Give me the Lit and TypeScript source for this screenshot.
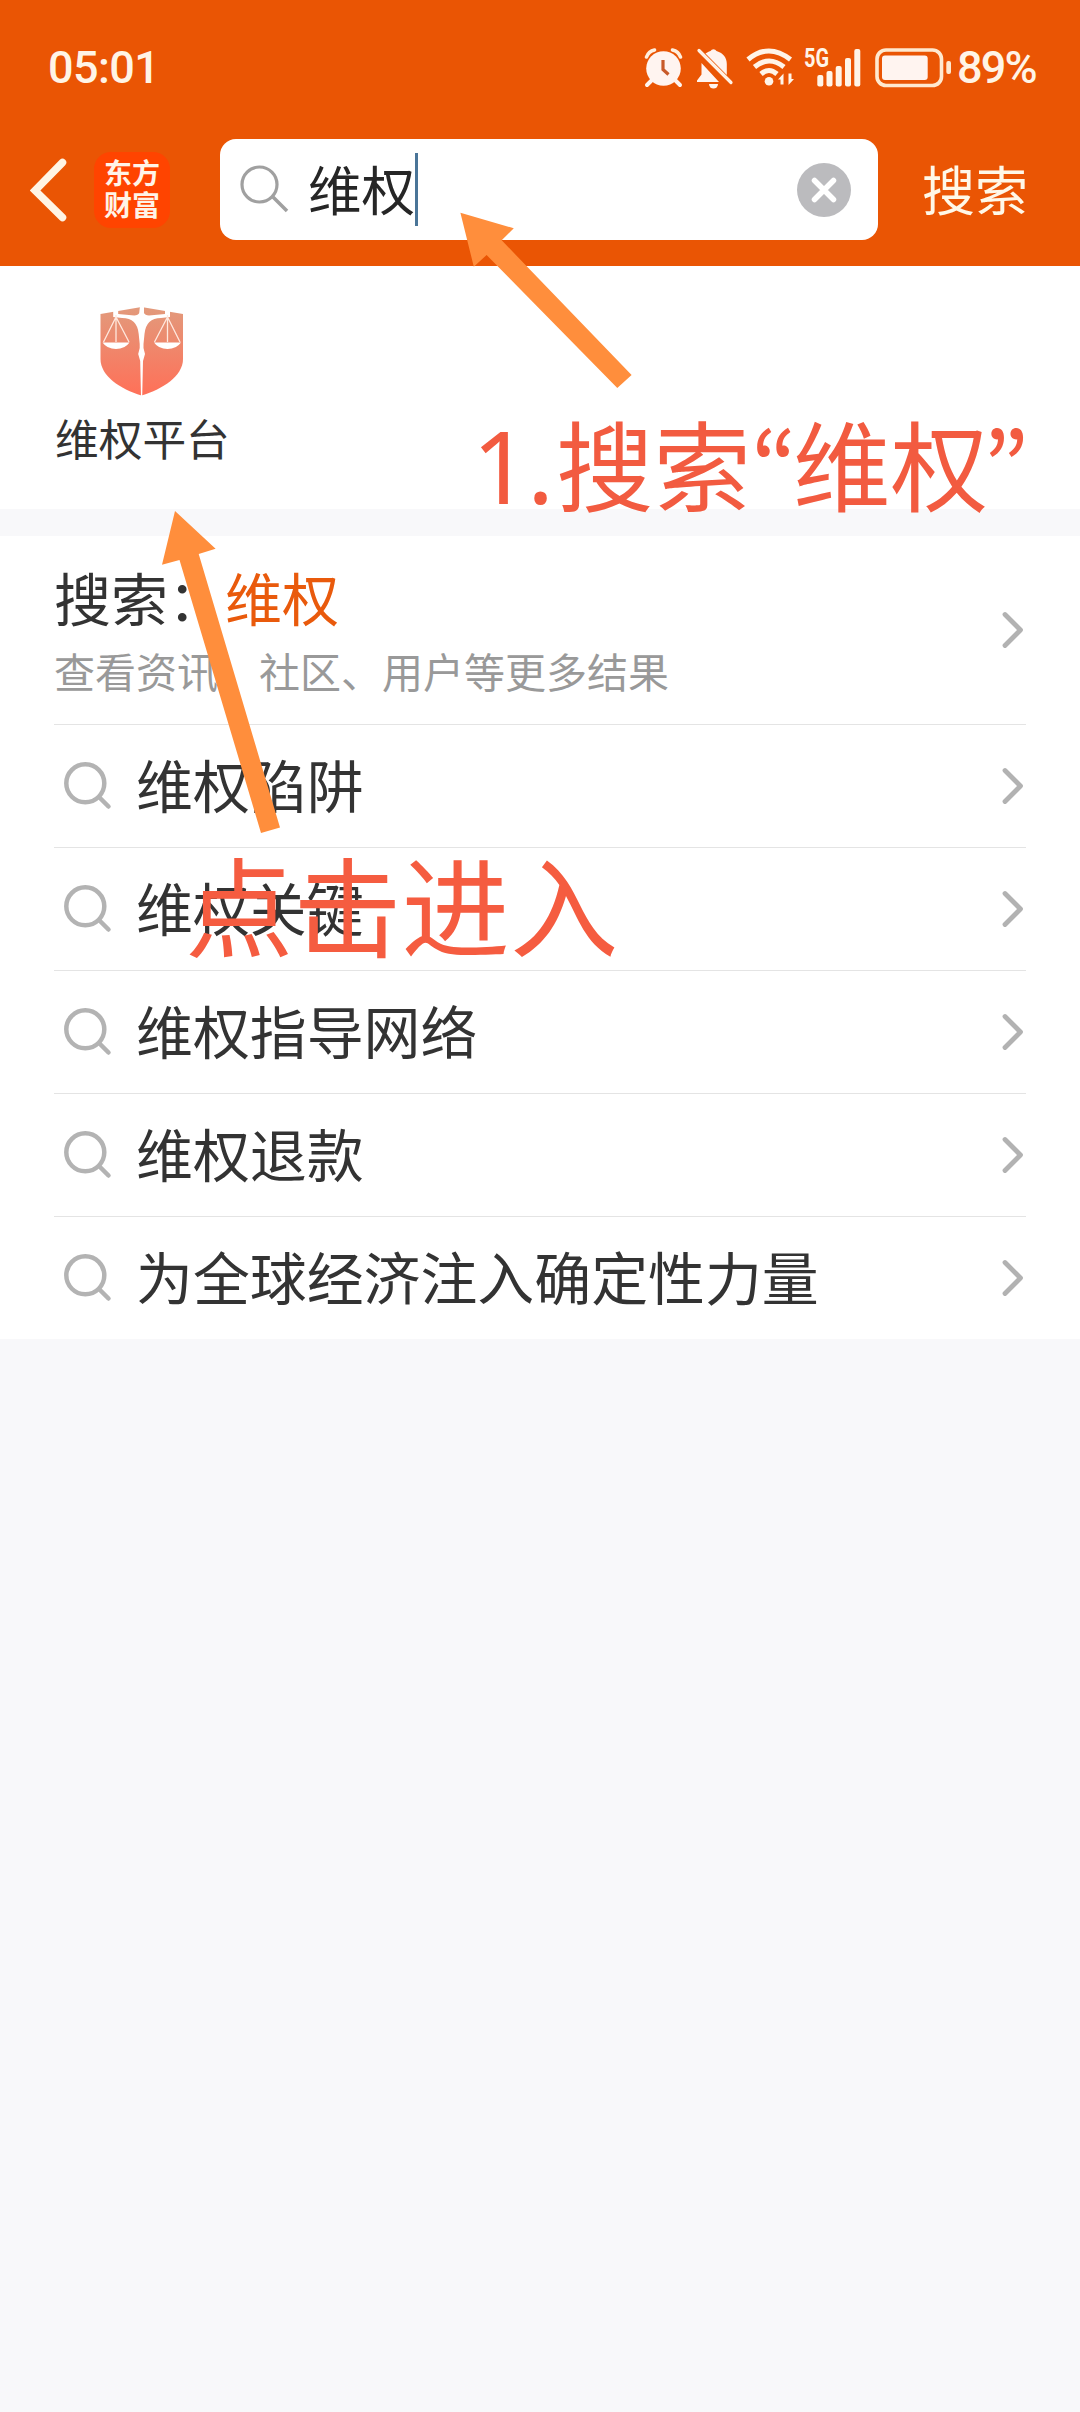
import { LitElement, html, css, svg } from "lit";
import { customElement, property } from "lit/decorators.js";

const FONT = css`"Noto Sans CJK SC", sans-serif`;

@customElement("status-bar")
class StatusBar extends LitElement {
  static styles = css`
    :host {
      display: flex;
      align-items: center;
      height: 40px;
      padding: 48px 44px 0 48px;
      color: #fff4e6;
      font-family: Roboto, ${FONT};
      font-weight: 500;
      font-size: 45px;
      line-height: 40px;
    }
    .time { flex: 1; letter-spacing: -0.6px; }
    .icons { display: flex; height: 40px; }
    .icons svg { display: block; overflow: visible; }
    .gap-a { margin-right: 14px; }
    .gap-b { margin-right: 13px; }
    .gap-c { margin-right: 9px; }
    .gap-d { margin-right: 14px; }
    .gap-e { margin-right: 5px; }
    .pct { width: 79px; letter-spacing: -1.8px; white-space: nowrap; }
    .net { font: 700 25px/25px Roboto, sans-serif; }
  `;
  render() {
    return html`
      <div class="time">05:01</div>
      <div class="icons">
        <svg class="gap-a" width="38" height="40" viewBox="645 48 38 40" fill="#fff4f0">
          <circle cx="663.5" cy="68.5" r="17.3" />
          <path d="M652 80l-5 5M675 80l5 5" stroke="#fff4f0" stroke-width="4" stroke-linecap="round" />
          <path d="M646.5 57a11 11 0 0 1 8-7M680.500 57a11 11 0 0 0-8-7" stroke="#ffeedd" stroke-width="3.600" fill="none" stroke-linecap="round" />
          <path d="M663 60v9.500l5.500 5" stroke="#c85a2a" stroke-width="3.200" fill="none" />
        </svg>
        <svg class="gap-b" width="36" height="40" viewBox="697 48 36 40" fill="#fff4f0">
          <path d="M697 82v-1.500l4.500-6V63l17.500 19z" />
          <path d="M705.500 53.500q3.500-2.200 5-2.500a3.500 3.500 0 0 1 6 0c7 2 10.300 7 10.300 13v11z" />
          <path d="M709 84h9a4.500 4.500 0 0 1-9 0z" />
          <path d="M699 50.500l32 32" stroke="#fff0e4" stroke-width="3.200" stroke-linecap="round" />
        </svg>
        <svg class="gap-c" width="48" height="40" viewBox="746 48 48 40" fill="none" stroke="#fff4e8" stroke-width="5">
          <path d="M748 59.500q20.500-17 42.500 0" />
          <path d="M754.500 67q14.500-12 29.500 0" />
          <path d="M761 74q8-7 16 0" />
          <circle cx="769" cy="81.300" r="4.300" fill="#fff4e8" stroke="none" />
          <path d="M778 79.500l5.500-6v11h-3v-5zM794 79l-5.500 6V73.500h3v5.500z" fill="#fff4e8" stroke="none" />
        </svg>
        <svg class="gap-d" width="58" height="40" viewBox="803 48 58 40" fill="#fff4e8">
          <text class="net" x="804" y="67" textLength="25" lengthAdjust="spacingAndGlyphs">5G</text>
          ${[[817.3, 75], [826.5, 71], [835.7, 66], [845, 58], [854.3, 49]].map(
            ([x, y]) => svg`<rect x=${x} y=${y} width="6" height=${86.5 - y} rx="2" />`
          )}
        </svg>
        <svg class="gap-e" width="77" height="40" viewBox="875 48 77 40">
          <rect x="877" y="50" width="64.500" height="35.500" rx="9" fill="none" stroke="#ffe9cf" stroke-width="3.600" />
          <rect x="882" y="55.500" width="45.700" height="24.500" rx="3" fill="#fff4f0" />
          <rect x="946.300" y="61" width="4.700" height="13" rx="2" fill="#ffe9cf" />
        </svg>
      </div>
      <div class="pct">89%</div>
    `;
  }
}

@customElement("search-bar")
class SearchBar extends LitElement {
  static styles = css`
    :host {
      display: flex;
      align-items: center;
      height: 101px;
      margin-top: 51px;
      padding: 0 0 26px 30px;
      font-family: ${FONT};
    }
    svg { display: block; flex: none; }
    .logo {
      flex: none;
      box-sizing: border-box;
      width: 76px;
      height: 76px;
      padding-bottom: 3px;
      margin: 0 50px 0 27px;
      border-radius: 17px;
      background: #ff4400;
      color: #fff4e8;
      display: flex;
      flex-direction: column;
      align-items: center;
      justify-content: center;
      font-size: 28px;
      line-height: 32px;
      font-weight: 700;
    }
    .box {
      display: flex;
      align-items: center;
      box-sizing: border-box;
      width: 657.500px;
      height: 101px;
      padding: 0 27px 0 20px;
      border-radius: 16px;
      background: #fff;
      margin-right: 44.500px;
      flex: none;
    }
    .query { margin: 0 0 4px 18px; font-size: 53.500px; line-height: 72px; color: #262626; }
    .caret { width: 3px; height: 73px; background: #4a7598; margin-right: auto; }
    .go { margin-bottom: 4px; font-size: 53px; line-height: 72px; color: #fff8e8; white-space: nowrap; }
  `;
  render() {
    return html`
      <svg width="37" height="64" viewBox="0 0 37 64" fill="none" stroke="#fff4e4" stroke-width="7.500">
        <path d="M32.500 4.500L5 32.500L32.500 59.500" stroke-linecap="round" />
      </svg>
      <div class="logo"><span>东方</span><span>财富</span></div>
      <div class="box">
        <svg width="50" height="50" viewBox="0 0 50 50" fill="none" stroke="#a0a0a0" stroke-width="3.200">
          <circle cx="19.500" cy="19.500" r="17.500" /><path d="M32 31L47 46" stroke-width="3.600" />
        </svg>
        <span class="query">维权</span><span class="caret"></span>
        <svg width="54" height="54" viewBox="0 0 54 54">
          <circle cx="27" cy="27" r="27" fill="#bbbbbe" />
          <path d="M17.500 17.500l19 19M36.500 17.500l-19 19" stroke="#fff" stroke-width="5.500" stroke-linecap="round" />
        </svg>
      </div>
      <span class="go">搜索</span>
    `;
  }
}

const chevron = svg`<svg class="chev" width="24" height="40" viewBox="0 0 24 40" fill="none"
  stroke="#b2b2b2" stroke-width="4.800" stroke-linecap="round" stroke-linejoin="round"><path d="M4 4.500L19.500 20L4 35.500" /></svg>`;

@customElement("suggest-row")
class SuggestRow extends LitElement {
  @property() text = "";
  static styles = css`
    :host {
      display: flex;
      align-items: center;
      box-sizing: border-box;
      height: 123px;
      margin: 0 54px;
      border-bottom: 1px solid #e4e4e4;
      font-family: ${FONT};
    }
    :host(:last-of-type) { border-bottom-color: transparent; }
    svg { display: block; flex: none; }
    .mag { margin-left: 9px; }
    .label { flex: 1; margin: 0 0 6px 23px; font-size: 56.900px; line-height: 84px; color: #333; white-space: nowrap; }
    .chev { margin-right: 1px; }
  `;
  render() {
    return html`
      <svg class="mag" width="50" height="50" viewBox="0 0 50 50" fill="none" stroke="#b3b3b3" stroke-width="4.500">
        <circle cx="22.300" cy="22.300" r="19" /><path d="M36.500 36.500L45.500 45.500" stroke-linecap="round" />
      </svg>
      <span class="label">${this.text}</span>
      ${chevron}
    `;
  }
}

@customElement("app-root")
class AppRoot extends LitElement {
  static styles = css`
    :host {
      display: block;
      position: relative;
      width: 1080px;
      height: 2412px;
      overflow: hidden;
      background: #f8f8fa;
      font-family: ${FONT};
      color: #333;
    }
    .header { height: 266px; background: #ea5504; }
    .entry { display: flex; height: 243px; background: #fff; padding-left: 55px; box-sizing: border-box; }
    .card { display: flex; flex-direction: column; align-items: center; padding-top: 40px; }
    .card svg { display: block; }
    .card span { margin-top: 9px; font-size: 43.700px; line-height: 64px; }
    .list { margin-top: 27px; background: #fff; height: 803px; }
    .top {
      display: flex;
      align-items: center;
      box-sizing: border-box;
      height: 189px;
      margin: 0 54px;
      border-bottom: 1px solid #e4e4e4;
    }
    .words { flex: 1; display: flex; flex-direction: column; padding-bottom: 2px; }
    .title { font-size: 57px; line-height: 80px; }
    .hot { color: #e95a0c; }
    .sub { margin-top: 2px; font-size: 41px; line-height: 64px; color: #999; }
    .chev { margin-right: 1px; }
    .arrows { position: absolute; left: 0; top: 0; }
    .note { position: absolute; color: #f25b40; white-space: nowrap; }
    .note-a { left: 472px; top: 390px; font-size: 97.500px; line-height: 144px; display: flex; align-items: baseline; }
    .lat { font-family: "Noto Sans", sans-serif; font-size: 101px; }
    .one { width: 55px; }
    .dot { width: 29px; }
    .quote { width: 42px; font-family: "Noto Sans CJK KR", sans-serif; }
    .close { margin-left: -5px; }
    .note-b { left: 185px; top: 822px; font-size: 108.300px; line-height: 160px; color: #f55c40; }
  `;
  render() {
    const words = ["维权陷阱", "维权关键", "维权指导网络", "维权退款", "为全球经济注入确定性力量"];
    return html`
      <div class="header"><status-bar></status-bar><search-bar></search-bar></div>
      <div class="entry">
        <div class="card">
          <svg width="84" height="90" viewBox="101 306 84 90">
            <defs>
              <linearGradient id="g" x1="0" y1="0" x2="0" y2="1">
                <stop offset="0" stop-color="#e29a7c" /><stop offset="1" stop-color="#ff7058" />
              </linearGradient>
            </defs>
            <path d="M101.500 314L142.500 307L184 314V359C184 376 164 389 142.500 395.500C121 389 101.500 376 101.500 359Z" fill="url(#g)" />
            <path d="M140.500 306h4v7q1 2 5 2.500l16-1.500v-3h5v6l-9 1q-15 0-16.500 16l-1 10v4l1.500 6-2 7-.8 36h-1.200l-.800-36-2-7 1.500-6v-4l-1-10q-1.500-16-16.500-16l-9-1v-6h5v3l16 1.500q4-.5 5-2.500z" transform="translate(.5 0)" fill="#fff" />
            <g fill="none" stroke="#ffe8de" stroke-width="1.300">
              <path d="M117 315v27M117 317l-12.500 25M117 317l13 25M168.500 315v27M168.500 317l-13 25M168.500 317l12.500 25" />
            </g>
            <path d="M103.500 342.500h27q-4.500 6.500-13.500 6.500t-13.500-6.500zM155 342.500h27q-4.500 6.500-13.500 6.500t-13.500-6.500z" fill="#fff" />
          </svg>
          <span>维权平台</span>
        </div>
      </div>
      <div class="list">
        <div class="top">
          <div class="words">
            <div class="title">搜索：<span class="hot">维权</span></div>
            <div class="sub">查看资讯、社区、用户等更多结果</div>
          </div>
          ${chevron}
        </div>
        ${words.map((w) => html`<suggest-row .text=${w}></suggest-row>`)}
      </div>
      <svg class="arrows" width="1080" height="900" fill="#ff8e3c">
        <path d="M460.400 212.700L513.800 228.300L501.700 240.300L631.600 375L617.300 388L486.600 255L473.800 266.700Z" />
        <path d="M175 511L215.600 548.700L198.700 554L280 827.500L261 833L179.500 560L162 564.700Z" />
      </svg>
      <div class="note note-a"><span class="lat one">1</span><span class="lat dot">.</span><span>搜索</span><span class="quote">“</span><span>维权</span><span class="quote close">”</span></div>
      <div class="note note-b">点击进入</div>
    `;
  }
}
